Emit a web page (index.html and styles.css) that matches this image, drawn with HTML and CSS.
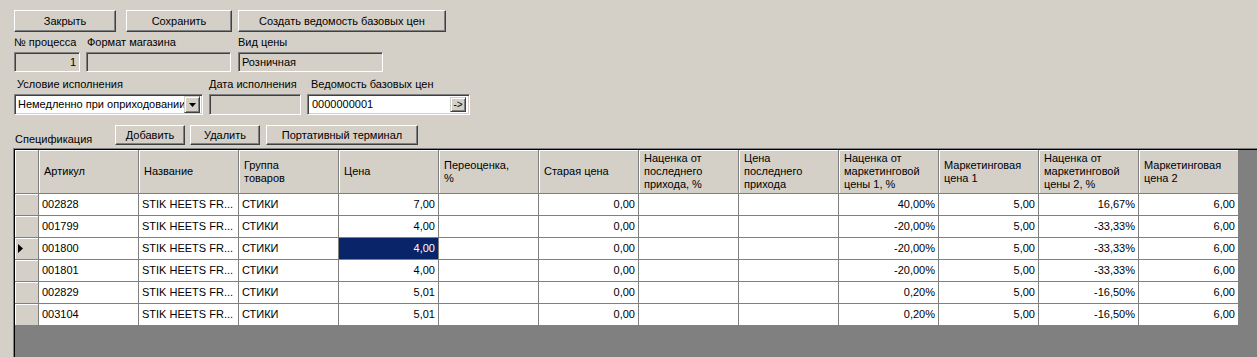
FILE: index.html
```html
<!DOCTYPE html>
<html lang="ru">
<head>
<meta charset="utf-8">
<title>Процесс</title>
<link rel="stylesheet" href="styles.css">
</head>
<body>
<div class="form">
  <div class="toolbar">
    <button class="btn w-close">Закрыть</button>
    <button class="btn w-save">Сохранить</button>
    <button class="btn w-create">Создать ведомость базовых цен</button>
  </div>

  <div class="row row1">
    <div class="group g-num">
      <div class="lbl">№ процесса</div>
      <div class="field ro right">1</div>
    </div>
    <div class="group g-fmt">
      <div class="lbl pl1">Формат магазина</div>
      <div class="field ro"></div>
    </div>
    <div class="group g-kind">
      <div class="lbl">Вид цены</div>
      <div class="field ro">Розничная</div>
    </div>
  </div>

  <div class="row row2">
    <div class="group g-cond">
      <div class="lbl pl3">Условие исполнения</div>
      <div class="field white combo">
        <span class="val">Немедленно при оприходовании</span>
        <span class="dd"><svg width="7" height="4" viewBox="0 0 7 4"><polygon points="0,0 7,0 3.5,4" fill="#000"/></svg></span>
      </div>
    </div>
    <div class="group g-date">
      <div class="lbl">Дата исполнения</div>
      <div class="field ro"></div>
    </div>
    <div class="group g-sheet">
      <div class="lbl pl4">Ведомость базовых цен</div>
      <div class="field white combo">
        <span class="val pv">0000000001</span>
        <span class="go">-&gt;</span>
      </div>
    </div>
  </div>

  <div class="specbar">
    <div class="speclbl">Спецификация</div>
    <button class="btn sb w-add">Добавить</button>
    <button class="btn sb w-del">Удалить</button>
    <button class="btn sb w-term">Портативный терминал</button>
  </div>

  <div class="grid">
    <div class="hc ind"></div>
    <div class="hc">Артикул</div>
    <div class="hc">Название</div>
    <div class="hc">Группа<br>товаров</div>
    <div class="hc">Цена</div>
    <div class="hc">Переоценка,<br>%</div>
    <div class="hc">Старая цена</div>
    <div class="hc">Наценка от<br>последнего<br>прихода, %</div>
    <div class="hc">Цена<br>последнего<br>прихода</div>
    <div class="hc">Наценка от<br>маркетинговой<br>цены 1, %</div>
    <div class="hc">Маркетинговая<br>цена 1</div>
    <div class="hc">Наценка от<br>маркетинговой<br>цены 2, %</div>
    <div class="hc">Маркетинговая<br>цена 2</div>

    <div class="ic"></div>
    <div class="c">002828</div><div class="c">STIK HEETS FR...</div><div class="c">СТИКИ</div><div class="c n">7,00</div><div class="c"></div><div class="c n">0,00</div><div class="c"></div><div class="c"></div><div class="c n">40,00%</div><div class="c n">5,00</div><div class="c n">16,67%</div><div class="c n">6,00</div>

    <div class="ic"></div>
    <div class="c">001799</div><div class="c">STIK HEETS FR...</div><div class="c">СТИКИ</div><div class="c n">4,00</div><div class="c"></div><div class="c n">0,00</div><div class="c"></div><div class="c"></div><div class="c n">-20,00%</div><div class="c n">5,00</div><div class="c n">-33,33%</div><div class="c n">6,00</div>

    <div class="ic cur"><svg width="5" height="9" viewBox="0 0 5 9"><polygon points="0,0 5,4.5 0,9" fill="#000"/></svg></div>
    <div class="c">001800</div><div class="c">STIK HEETS FR...</div><div class="c">СТИКИ</div><div class="c n sel">4,00</div><div class="c"></div><div class="c n">0,00</div><div class="c"></div><div class="c"></div><div class="c n">-20,00%</div><div class="c n">5,00</div><div class="c n">-33,33%</div><div class="c n">6,00</div>

    <div class="ic"></div>
    <div class="c">001801</div><div class="c">STIK HEETS FR...</div><div class="c">СТИКИ</div><div class="c n">4,00</div><div class="c"></div><div class="c n">0,00</div><div class="c"></div><div class="c"></div><div class="c n">-20,00%</div><div class="c n">5,00</div><div class="c n">-33,33%</div><div class="c n">6,00</div>

    <div class="ic"></div>
    <div class="c">002829</div><div class="c">STIK HEETS FR...</div><div class="c">СТИКИ</div><div class="c n">5,01</div><div class="c"></div><div class="c n">0,00</div><div class="c"></div><div class="c"></div><div class="c n">0,20%</div><div class="c n">5,00</div><div class="c n">-16,50%</div><div class="c n">6,00</div>

    <div class="ic"></div>
    <div class="c">003104</div><div class="c">STIK HEETS FR...</div><div class="c">СТИКИ</div><div class="c n">5,01</div><div class="c"></div><div class="c n">0,00</div><div class="c"></div><div class="c"></div><div class="c n">0,20%</div><div class="c n">5,00</div><div class="c n">-16,50%</div><div class="c n">6,00</div>
  </div>
</div>
</body>
</html>
```

FILE: styles.css
```css
* { box-sizing: border-box; }

html, body {
  margin: 0;
  height: 357px;
  overflow: hidden;
}

body {
  background: #d4d0c8;
  color: #000;
  font: 11px "Liberation Sans", Arial, sans-serif;
}

.form {
  padding: 10px 0 0 14px;
}

/* buttons */
.btn {
  font: 11px "Liberation Sans", Arial, sans-serif;
  color: #000;
  background: #d4d0c8;
  height: 22px;
  padding: 0;
  margin: 0;
  border: 1px solid;
  border-color: #fff #404040 #404040 #fff;
  box-shadow: inset -1px -1px 0 #808080;
  border-radius: 0;
  line-height: 18px;
  text-align: center;
}

.toolbar {
  display: flex;
  height: 22px;
}

.w-close { width: 102px; margin-right: 10px; }
.w-save { width: 106px; margin-right: 6px; }
.w-create { width: 208px; }

/* field rows */
.row {
  display: flex;
}
.row1 { margin-top: 4px; }
.row2 { margin-top: 6px; }

.group {
  display: flex;
  flex-direction: column;
}

.lbl {
  height: 16px;
  line-height: 13px;
  white-space: nowrap;
}
.pl1 { padding-left: 1px; }
.pl3 { padding-left: 3px; }
.pl4 { padding-left: 4px; }

.field {
  height: 20px;
  border: 1px solid;
  border-color: #808080 #fff #fff #808080;
  box-shadow: inset 1px 1px 0 #404040, inset -1px -1px 0 #d4d0c8;
  padding: 0 3px;
  line-height: 18px;
  white-space: nowrap;
  overflow: hidden;
}
.row2 .field { height: 21px; line-height: 19px; }

.ro { background: #d4d0c8; }
.white { background: #fff; }
.right { text-align: right; }

.g-num { width: 66px; margin-right: 6px; }
.g-fmt { width: 145px; margin-right: 7px; }
.g-kind { width: 145px; }

.g-cond { width: 189px; margin-right: 6px; }
.g-date { width: 92px; margin-right: 6px; }
.g-sheet { width: 163px; }

.combo {
  display: flex;
  align-items: center;
  padding: 2px;
}
.combo .val {
  flex: 1;
  overflow: hidden;
  padding-left: 1px;
}
.combo .pv { padding-left: 2px; }

.dd, .go {
  width: 16px;
  height: 17px;
  background: #d4d0c8;
  border: 1px solid;
  border-color: #d4d0c8 #404040 #404040 #d4d0c8;
  box-shadow: inset 1px 1px 0 #fff, inset -1px -1px 0 #808080;
  display: flex;
  align-items: center;
  justify-content: center;
  flex: none;
}
.go {
  width: 16px;
  height: 15px;
  margin-right: 1px;
  font-size: 10px;
  line-height: 13px;
  padding: 0;
  overflow: visible;
  white-space: nowrap;
}

/* spec bar */
.specbar {
  display: flex;
  margin-top: 10px;
  height: 20px;
}
.speclbl {
  width: 101px;
  padding-top: 8px;
  padding-left: 1px;
  line-height: 13px;
}
.btn.sb {
  height: 20px;
  line-height: 16px;
}
.w-add { width: 70px; margin-right: 5px; }
.w-del { width: 70px; margin-right: 6px; }
.w-term { width: 152px; }

/* grid */
.grid {
  margin-top: 3px;
  margin-left: -1px;
  width: 1260px;
  height: 220px;
  background: #808080;
  border-top: 1px solid #808080;
  border-left: 1px solid #808080;
  box-shadow: inset 1px 1px 0 #000;
  padding: 1px 0 0 1px;
  display: grid;
  grid-template-columns: 24px repeat(12, 100px);
  grid-auto-rows: 22px;
  grid-template-rows: 44px;
  align-content: start;
}

.hc {
  background: #d4d0c8;
  border-right: 1px solid #808080;
  border-bottom: 1px solid #808080;
  box-shadow: inset 1px 1px 0 #fff;
  display: flex;
  align-items: center;
  padding-left: 5px;
  line-height: 13px;
  white-space: nowrap;
  overflow: hidden;
}

.ic {
  background: #d4d0c8;
  border-right: 1px solid #808080;
  border-bottom: 1px solid #808080;
  box-shadow: inset 1px 1px 0 #fff;
  display: flex;
  align-items: center;
  padding-left: 3px;
}

.c {
  background: #fff;
  border-right: 1px solid #808080;
  border-bottom: 1px solid #808080;
  padding: 0 3px;
  line-height: 21px;
  white-space: nowrap;
  overflow: hidden;
}
.c.n { text-align: right; }
.c.sel { background: #0a246a; color: #fff; }
```
